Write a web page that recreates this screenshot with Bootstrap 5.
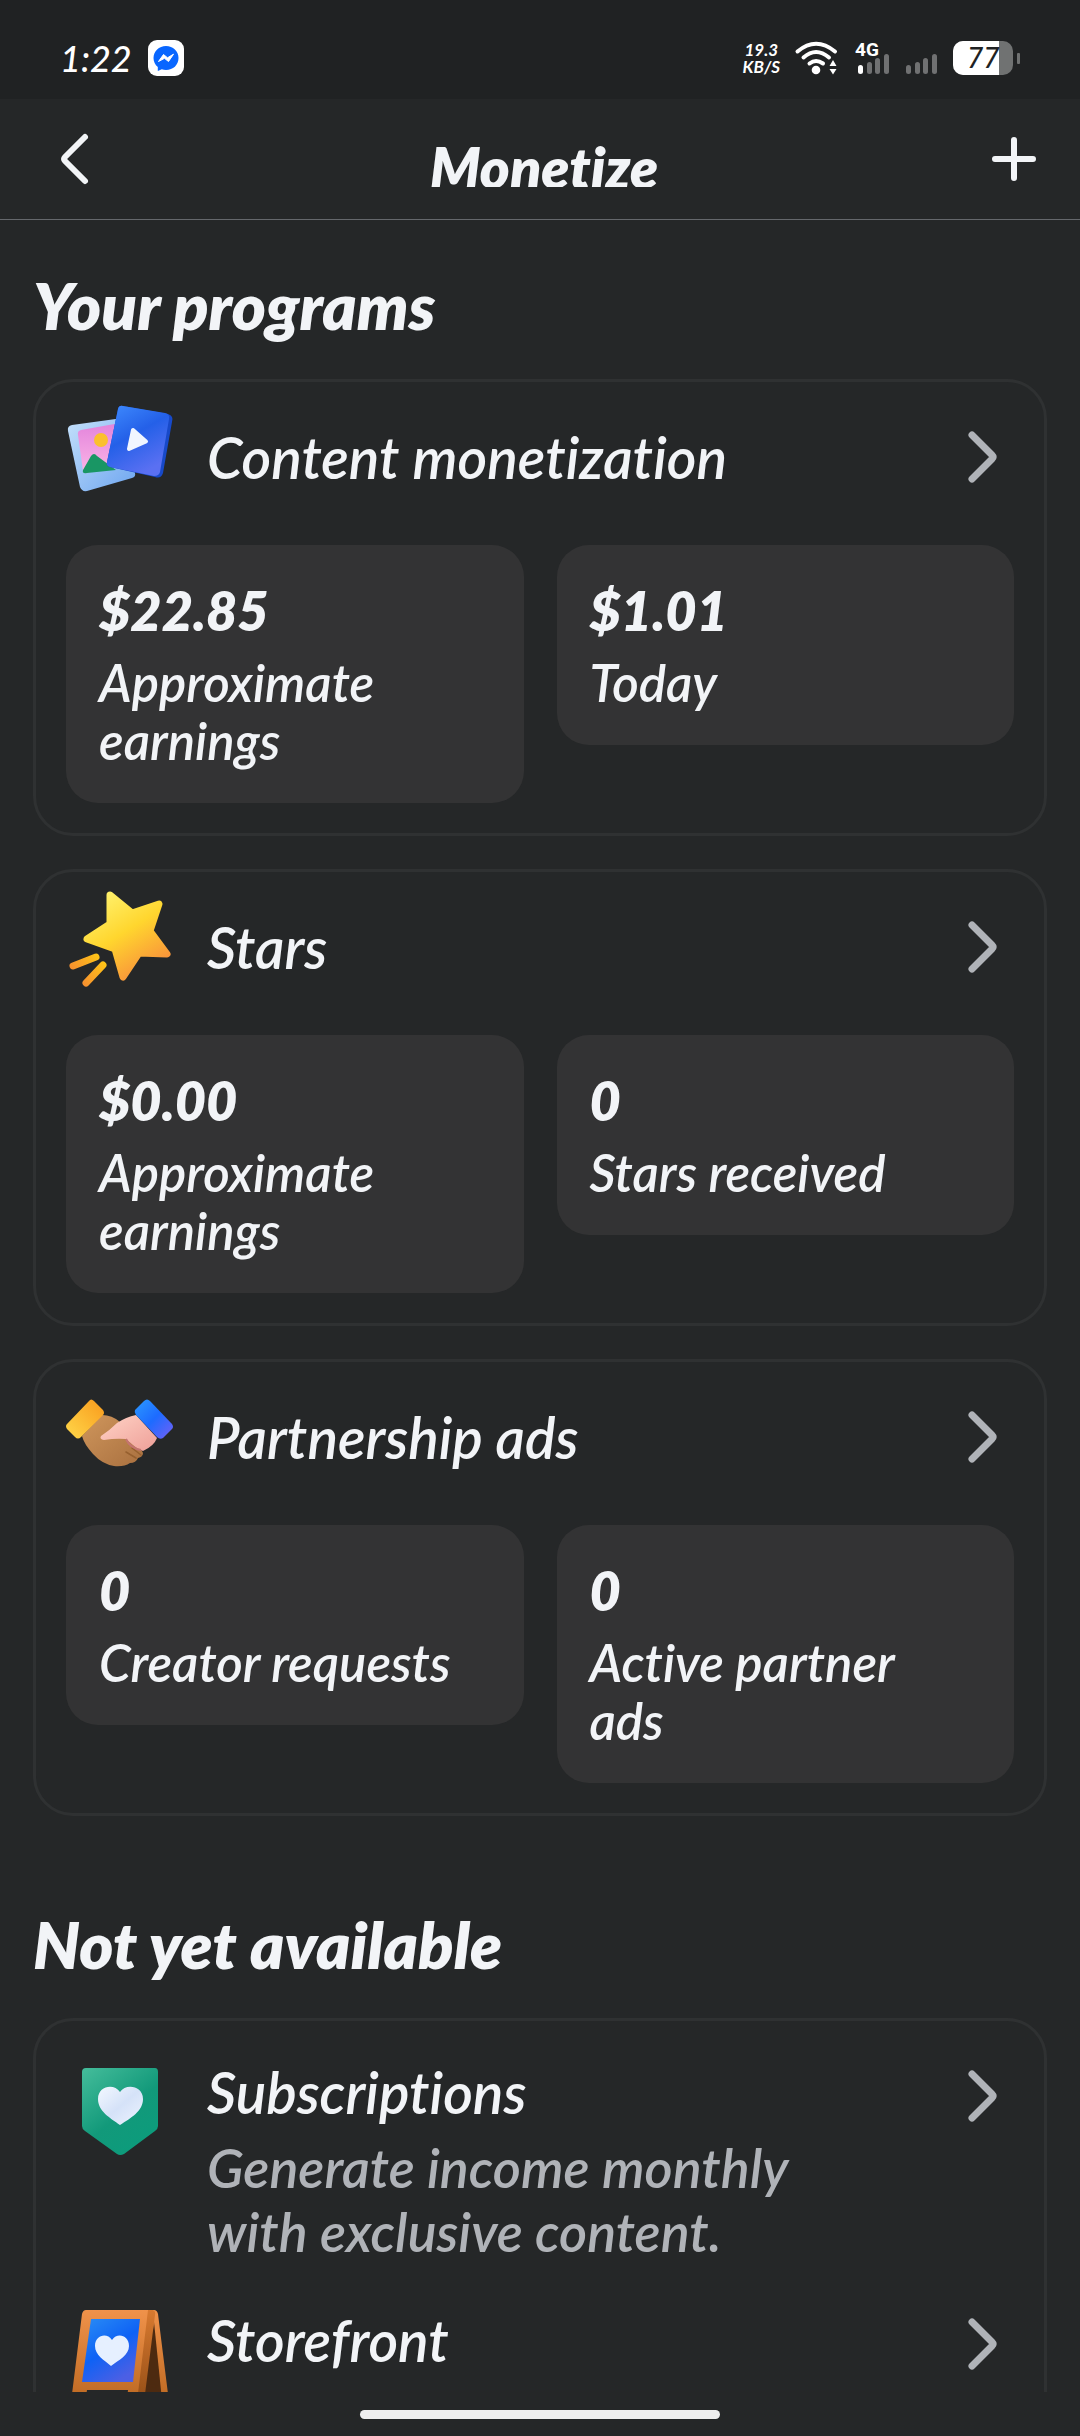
<!DOCTYPE html>
<html lang="en">
<head>
<meta charset="utf-8">
<meta name="viewport" content="width=device-width, initial-scale=1">
<title>Monetize</title>
<link href="https://cdn.jsdelivr.net/npm/bootstrap@5.3.0/dist/css/bootstrap.min.css" rel="stylesheet">
<style>
  body { background: #252728; color: #f2f4f7; font-family: Lato, "Open Sans", sans-serif; font-style: italic; font-weight: 600; font-variant-ligatures: none; }
  a, a:hover { color: inherit; text-decoration: none; }
  svg { display: block; flex: none; overflow: visible; }
  .status-strip { height: 99px; background: #202223; padding: 16px 60px 0; }
  .clock { font-size: 36px; line-height: 40px; color: #fff; font-weight: 500; }
  .net-speed { font-size: 17px; line-height: 17px; font-weight: 700; color: #fff; margin-right: 15px; }
  .top-nav { height: 121px; border-bottom: 1px solid #65686c; padding: 0 22px 0 30px; }
  .top-nav .btn { width: 88px; height: 88px; border: 0; padding: 0; }
  .nav-title { height: 56px; font-size: 57px; line-height: 72px; font-weight: 800; overflow: hidden; }
  .feed { min-height: 0; padding: 0 33px; scrollbar-width: none; }
  .feed::-webkit-scrollbar { display: none; }
  .section-title { font-size: 65px; line-height: 66px; font-weight: 800; margin: 0 0 41px; padding-top: 52px; }
  .section-title.later { padding-top: 62px; }
  .panel { border: 3px solid #2f3132; border-radius: 40px; padding: 14px 30px 30px; margin-bottom: 33px; }
  .panel-head { height: 122px; margin-bottom: 27px; gap: 33px; }
  .panel-name { font-size: 57px; line-height: 68px; font-weight: 600; margin: 0; }
  .stats { gap: 33px; }
  .stat { flex: 1 1 0; background: #333334; border-radius: 32px; padding: 33px; }
  .stat-value { font-size: 54px; line-height: 66px; font-weight: 800; margin-bottom: 10px; }
  .stat-label { font-size: 51px; line-height: 58px; padding-right: 24px; }
  .offers { padding-top: 37px; margin-bottom: 0; }
  .offer { gap: 33px; margin-bottom: 42px; min-height: 206px; }
  .offer-note { font-size: 54px; line-height: 64px; color: #b0b3b8; margin: 10px 0 0; padding-right: 60px; }
  .gesture-area { height: 44px; }
  .gesture-bar { width: 33.33%; height: 9px; background: #eee; }
</style>
</head>
<body>
<div class="vh-100 d-flex flex-column overflow-hidden">

  <div class="status-strip d-flex align-items-center justify-content-between flex-shrink-0">
    <div class="d-flex align-items-center">
      <span class="clock me-3">1:22</span>
      <svg width="36" height="36" viewBox="0 0 36 36" role="img" aria-label="Messenger">
        <rect width="36" height="36" rx="9" fill="#fff"/>
        <path d="M18 6C11 6 5.500 11 5.500 18c0 3.600 1.600 6.800 4.300 9v4l4-1.800c1.300.5 2.700.8 4.200.8 7 0 12.500-5 12.500-12S25 6 18 6z" fill="#0866ff"/>
        <path d="M10.500 21.500 15.500 14.500 19.500 17.800 25.500 14.200 20.500 21.500 16.500 18.300z" fill="#fff" stroke="#fff" stroke-linejoin="round"/>
      </svg>
    </div>
    <div class="d-flex align-items-center">
      <div class="net-speed text-center">19.3<br>KB/S</div>
      <svg class="me-3" width="44" height="34" viewBox="0 0 44 34" aria-label="Wi-Fi" role="img">
        <g fill="none" stroke="#fff" stroke-width="4" stroke-linecap="round">
          <path d="M2.500 10.500Q21 -5 40 10.500"/><path d="M8.500 16.500Q21 5.500 34 16.500"/><path d="M14.500 22.500Q21 17.500 28 22.500"/>
        </g>
        <circle cx="21" cy="29" r="4.300" fill="#fff"/>
        <path d="M34.500 25 38 19 41.500 25zM34.500 28 38 33.500 41.500 28z" fill="#fff"/>
      </svg>
      <svg class="me-3" width="35" height="34" viewBox="0 0 35 34" aria-label="4G signal" role="img">
        <text x="0" y="15" fill="#fff" font-family="Roboto, sans-serif" font-style="normal" font-weight="700" font-size="19">4G</text>
        <rect x="3" y="24" width="5" height="9" rx="2.500" fill="#fff"/>
        <g fill="#707172"><rect x="12" y="21" width="5" height="12" rx="2.500"/><rect x="20" y="17" width="5" height="16" rx="2.500"/><rect x="29" y="13" width="5" height="20" rx="2.500"/></g>
      </svg>
      <svg class="me-3" width="31" height="34" viewBox="0 0 31 34" aria-label="No signal" role="img">
        <g fill="#707172"><rect x="0" y="24" width="5" height="9" rx="2.500"/><rect x="9" y="21" width="5" height="12" rx="2.500"/><rect x="17" y="17" width="5" height="16" rx="2.500"/><rect x="26" y="13" width="5" height="20" rx="2.500"/></g>
      </svg>
      <svg width="67" height="34" viewBox="0 0 67 34" aria-label="Battery" role="img">
        <rect width="60" height="34" rx="10" fill="#707272"/>
        <path d="M10 0H46V34H10A10 10 0 0 1 0 24V10A10 10 0 0 1 10 0z" fill="#fff"/>
        <rect x="64" y="12" width="3" height="11" rx="1" fill="#707272"/>
        <text x="14" y="27" fill="#202223" font-family="Lato, sans-serif" font-weight="500" font-size="28">77</text>
      </svg>
    </div>
  </div>

  <header class="top-nav d-flex align-items-center flex-shrink-0">
    <button class="btn d-flex align-items-center justify-content-center" type="button" aria-label="Back">
      <svg width="32" height="56" viewBox="0 0 32 56" fill="none" stroke="#f2f4f7" stroke-width="6" stroke-linecap="round" stroke-linejoin="round"><path d="M27 6 7 26Q5 28 7 30L27 50"/></svg>
    </button>
    <h1 class="nav-title flex-grow-1 text-center m-0">Monetize</h1>
    <button class="btn d-flex align-items-center justify-content-center" type="button" aria-label="Add">
      <svg width="46" height="46" viewBox="0 0 46 46" stroke="#f2f4f7" stroke-width="6" stroke-linecap="round"><path d="M23 4V42M4 23H42"/></svg>
    </button>
  </header>

  <main class="feed flex-grow-1 overflow-auto">
    <h2 class="section-title">Your programs</h2>

    <section class="panel">
      <a href="#content" class="panel-head d-flex align-items-center">
        <svg class="align-self-start" width="108" height="108" viewBox="0 0 108 108" aria-hidden="true">
          <defs>
            <linearGradient id="frame" x1="0" y1="0" x2="1" y2="1"><stop offset="0" stop-color="#c4e0fb"/><stop offset="1" stop-color="#6ea6f0"/></linearGradient>
            <linearGradient id="sky" x1="0" y1="0" x2="0" y2="1"><stop offset="0" stop-color="#e384dc"/><stop offset="1" stop-color="#fbb5e6"/></linearGradient>
            <linearGradient id="film" x1="0" y1="0" x2=".5" y2="1"><stop offset="0" stop-color="#3f8cff"/><stop offset=".5" stop-color="#2460e8"/><stop offset="1" stop-color="#5a70f2"/></linearGradient>
          </defs>
          <path d="M6 29 57 22 69 77Q70 81 66 82L21 95Q16 96 14 91L2 35Q1 30 6 29z" fill="url(#frame)"/>
          <path d="M15 34 54 27 60 67 21 77Q18 78 17 75L12 39Q11 35 15 34z" fill="url(#sky)"/>
          <circle cx="35" cy="44" r="7" fill="#fbc02d"/>
          <path d="M17 74 25 60Q28 56 31 60L50 74 21 77Q16 78 17 74z" fill="#199664"/>
          <path d="M57 10 102 18Q108 20 106 26L97 77Q95 83 89 81L44 71Q40 70 41 66L52 13Q53 9 57 10z" fill="#1749c9"/>
          <path d="M57 10 99 17Q104 18 103 23L94 76Q93 80 88 80L44 71Q40 70 41 66L52 13Q53 9 57 10z" fill="url(#film)"/>
          <path d="M67 34 80 45.500 63 53z" fill="#f1f6ff" stroke="#f1f6ff" stroke-width="4" stroke-linejoin="round"/>
        </svg>
        <h3 class="panel-name flex-grow-1">Content monetization</h3>
        <svg width="64" height="64" viewBox="0 0 64 64" fill="none" stroke="#b0b3b8" stroke-width="7" stroke-linecap="round" stroke-linejoin="round"><path d="M22 10 42 30Q44 32 42 34L22 54"/></svg>
      </a>
      <div class="stats d-flex align-items-start">
        <div class="stat"><div class="stat-value">$22.85</div><div class="stat-label">Approximate earnings</div></div>
        <div class="stat"><div class="stat-value">$1.01</div><div class="stat-label">Today</div></div>
      </div>
    </section>

    <section class="panel">
      <a href="#stars" class="panel-head d-flex align-items-center">
        <svg class="align-self-start" width="108" height="108" viewBox="0 0 108 108" aria-hidden="true">
          <defs>
            <linearGradient id="gold" x1=".2" y1="0" x2=".8" y2="1"><stop offset="0" stop-color="#fff06a"/><stop offset=".45" stop-color="#ffd62e"/><stop offset="1" stop-color="#f88a3c"/></linearGradient>
            <linearGradient id="trail" gradientUnits="userSpaceOnUse" x1="36" y1="70" x2="8" y2="92"><stop offset="0" stop-color="#ffc815"/><stop offset="1" stop-color="#f58a32"/></linearGradient>
          </defs>
          <path d="M44 9 66 27 93 18 84 45 101 68 73 67 57 91 49 63 21 53 44 38z" fill="url(#gold)" stroke="url(#gold)" stroke-width="7" stroke-linejoin="round"/>
          <path d="M7 80 30 71M20 97 37 79" stroke="url(#trail)" stroke-width="7" stroke-linecap="round"/>
        </svg>
        <h3 class="panel-name flex-grow-1">Stars</h3>
        <svg width="64" height="64" viewBox="0 0 64 64" fill="none" stroke="#b0b3b8" stroke-width="7" stroke-linecap="round" stroke-linejoin="round"><path d="M22 10 42 30Q44 32 42 34L22 54"/></svg>
      </a>
      <div class="stats d-flex align-items-start">
        <div class="stat"><div class="stat-value">$0.00</div><div class="stat-label">Approximate earnings</div></div>
        <div class="stat"><div class="stat-value">0</div><div class="stat-label">Stars received</div></div>
      </div>
    </section>

    <section class="panel">
      <a href="#partnership" class="panel-head d-flex align-items-center">
        <svg class="align-self-start" width="108" height="108" viewBox="0 0 108 108" aria-hidden="true">
          <defs>
            <linearGradient id="cuffA" x1="1" y1="0" x2="0" y2="1"><stop offset="0" stop-color="#f99a1c"/><stop offset="1" stop-color="#ffd84a"/></linearGradient>
            <linearGradient id="cuffB" x1="0" y1="0" x2="1" y2="1"><stop offset="0" stop-color="#2c9aff"/><stop offset=".5" stop-color="#1d6bff"/><stop offset="1" stop-color="#7560f5"/></linearGradient>
            <linearGradient id="tan" x1="0" y1="0" x2="1" y2="1"><stop offset="0" stop-color="#cf965c"/><stop offset="1" stop-color="#a9703f"/></linearGradient>
            <linearGradient id="rose" x1="0" y1="0" x2="1" y2="1"><stop offset="0" stop-color="#ffd3c6"/><stop offset="1" stop-color="#ee9f98"/></linearGradient>
          </defs>
          <path d="M36 39Q46 39 54 46L70 64 77 77Q77 81 72 82Q70 87 64 87Q58 91 48 90Q36 88 27 78Q18 68 16 60z" fill="url(#tan)"/>
          <path d="M60 76 70 82M66 72 75 79" stroke="#96602f" stroke-width="1.500" stroke-linecap="round"/>
          <path d="M70 39 91 62Q88 70 77 75Q70 72 67 69L60 63Q50 62 38 64Q33 63 35 60Q44 54 51 47Q60 41 70 39z" fill="url(#rose)"/>
          <path d="M60 63Q64 72 75 74" stroke="#c47470" stroke-width="2" fill="none"/>
          <path d="M23 25Q25 22 28 25L37 34Q39 37 37 39L15 61Q12 64 9 61L1 53Q-1 50 1 48z" fill="url(#cuffA)"/>
          <path d="M78 25Q81 22 84 25L106 48Q108 51 106 53L97 62Q94 64 91 61L70 39Q68 36 69 34z" fill="url(#cuffB)"/>
        </svg>
        <h3 class="panel-name flex-grow-1">Partnership ads</h3>
        <svg width="64" height="64" viewBox="0 0 64 64" fill="none" stroke="#b0b3b8" stroke-width="7" stroke-linecap="round" stroke-linejoin="round"><path d="M22 10 42 30Q44 32 42 34L22 54"/></svg>
      </a>
      <div class="stats d-flex align-items-start">
        <div class="stat"><div class="stat-value">0</div><div class="stat-label">Creator requests</div></div>
        <div class="stat"><div class="stat-value">0</div><div class="stat-label">Active partner ads</div></div>
      </div>
    </section>

    <h2 class="section-title later">Not yet available</h2>

    <section class="panel offers">
      <a href="#subscriptions" class="offer d-flex align-items-start">
        <svg width="108" height="108" viewBox="0 0 108 108" aria-hidden="true">
          <defs>
            <linearGradient id="mint" x1="0" y1="0" x2=".7" y2="1"><stop offset="0" stop-color="#45bd9b"/><stop offset=".6" stop-color="#12997a"/><stop offset="1" stop-color="#0c9c7c"/></linearGradient>
            <linearGradient id="pearl" x1="0" y1="0" x2="1" y2="1"><stop offset="0" stop-color="#f3f8ff"/><stop offset=".5" stop-color="#d5e2f8"/><stop offset="1" stop-color="#eef4ff"/></linearGradient>
          </defs>
          <path d="M20 10H89Q92 10 92 14V68Q92 71 89 73L58 96Q54 98 51 96L19 73Q16 71 16 68V14Q16 10 20 10z" fill="url(#mint)"/>
          <path d="M54 67C44 60 32 53 32 41C32 28 48 25 54 34C60 25 77 28 77 41C77 53 65 60 54 67z" fill="url(#pearl)"/>
        </svg>
        <div class="flex-grow-1">
          <h3 class="panel-name">Subscriptions</h3>
          <p class="offer-note">Generate income monthly with exclusive content.</p>
        </div>
        <svg width="64" height="76" viewBox="0 -6 64 76" fill="none" stroke="#b0b3b8" stroke-width="7" stroke-linecap="round" stroke-linejoin="round"><path d="M22 10 42 30Q44 32 42 34L22 54"/></svg>
      </a>
      <a href="#storefront" class="offer d-flex align-items-start">
        <svg width="108" height="108" viewBox="0 0 108 108" aria-hidden="true">
          <defs>
            <linearGradient id="wood" x1="0" y1="0" x2="0" y2="1"><stop offset="0" stop-color="#f0924a"/><stop offset="1" stop-color="#b8651e"/></linearGradient>
            <linearGradient id="woodSide" x1="0" y1="0" x2="0" y2="1"><stop offset="0" stop-color="#d87a30"/><stop offset="1" stop-color="#8f4a14"/></linearGradient>
            <linearGradient id="poster" x1="0" y1="0" x2=".6" y2="1"><stop offset="0" stop-color="#2a8df5"/><stop offset=".55" stop-color="#0e62f5"/><stop offset="1" stop-color="#4c5fe4"/></linearGradient>
          </defs>
          <path d="M78 4H88Q91 4 92 8L104 104H94L87 20z" fill="url(#wood)"/>
          <path d="M88 16 97 104H76z" fill="#4d2a10"/>
          <path d="M80 4H87Q90 5 89 9L77 104H68z" fill="url(#woodSide)"/>
          <path d="M20 4H82L70 104H60L62 84H21L18 104H4L16 8Q17 4 20 4z" fill="url(#wood)"/>
          <path d="M25 13H74L67 76H16z" fill="url(#poster)"/>
          <path d="M45 60C38 54 29 49 29 40C29 29 41 26 46 34C51 26 63 29 63 40C63 49 53 54 45 60z" fill="#e6f0ff"/>
        </svg>
        <div class="flex-grow-1">
          <h3 class="panel-name">Storefront</h3>
        </div>
        <svg width="64" height="76" viewBox="0 -6 64 76" fill="none" stroke="#b0b3b8" stroke-width="7" stroke-linecap="round" stroke-linejoin="round"><path d="M22 10 42 30Q44 32 42 34L22 54"/></svg>
      </a>
    </section>
  </main>

  <div class="gesture-area d-flex align-items-center justify-content-center flex-shrink-0">
    <div class="gesture-bar rounded-pill"></div>
  </div>
</div>
<script src="https://cdn.jsdelivr.net/npm/bootstrap@5.3.0/dist/js/bootstrap.bundle.min.js"></script>
</body>
</html>
